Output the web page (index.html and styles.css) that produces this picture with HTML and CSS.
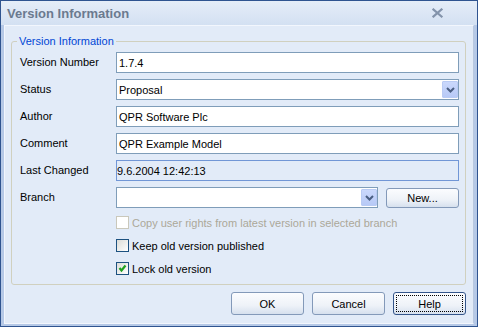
FILE: index.html
```html
<!DOCTYPE html>
<html>
<head>
<meta charset="utf-8">
<link rel="stylesheet" href="styles.css">
</head>
<body>
<div class="window">
  <div class="titlebar">
    <span class="title">Version Information</span>
    <svg class="close" width="11" height="10" viewBox="0 0 11 10"><path d="M1.5 1.5 L9.5 8.5 M9.5 1.5 L1.5 8.5" stroke="#8393ab" stroke-width="2.2" stroke-linecap="square" fill="none"/></svg>
  </div>
  <div class="frame">
    <div class="body">
      <fieldset class="group">
        <legend>Version Information</legend>
        <div class="form">
          <label class="lbl">Version Number</label>
          <div class="input">1.7.4</div>
          <label class="lbl">Status</label>
          <div class="input combo"><span class="val">Proposal</span><span class="drop"><svg width="9" height="6" viewBox="0 0 9 6"><path d="M1 1 L4.5 4.5 L8 1" stroke="#4a5e82" stroke-width="2" fill="none"/></svg></span></div>
          <label class="lbl">Author</label>
          <div class="input">QPR Software Plc</div>
          <label class="lbl">Comment</label>
          <div class="input">QPR Example Model</div>
          <label class="lbl">Last Changed</label>
          <div class="input readonly">9.6.2004 12:42:13</div>
          <label class="lbl">Branch</label>
          <div class="branch">
            <div class="input combo"><span class="val"></span><span class="drop"><svg width="9" height="6" viewBox="0 0 9 6"><path d="M1 1 L4.5 4.5 L8 1" stroke="#4a5e82" stroke-width="2" fill="none"/></svg></span></div>
            <div class="btn new">New...</div>
          </div>
        </div>
        <div class="checks">
          <div class="check disabled"><span class="box"></span><span>Copy user rights from latest version in selected branch</span></div>
          <div class="check"><span class="box"></span><span>Keep old version published</span></div>
          <div class="check"><span class="box"><svg width="11" height="11" viewBox="0 0 11 11"><path d="M2.5 5 L4.5 7.5 L8.5 2.5" stroke="#21a121" stroke-width="2.2" fill="none"/></svg></span><span>Lock old version</span></div>
        </div>
      </fieldset>
      <div class="buttons">
        <div class="btn">OK</div>
        <div class="btn">Cancel</div>
        <div class="btn default"><span class="focus">Help</span></div>
      </div>
    </div>
  </div>
</div>
</body>
</html>
```
FILE: styles.css
```css
* { box-sizing: border-box; }
html, body { margin: 0; padding: 0; }
body {
  width: 478px;
  height: 327px;
  overflow: hidden;
  font-family: "Liberation Sans", Arial, sans-serif;
  font-size: 11px;
  color: #000;
  background: #e2ebf8;
}
.window {
  width: 478px;
  height: 327px;
  border: 1px solid #2f5490;
  display: flex;
  flex-direction: column;
  background: #b6c9e7;
}
.titlebar {
  height: 24px;
  flex: none;
  display: flex;
  align-items: center;
  justify-content: space-between;
  padding: 0 34px 0 6px;
  background: linear-gradient(#e5edf8, #d3e0f2);
}
.title {
  font-weight: bold;
  font-size: 13px;
  color: #6b7a8f;
}
.close { display: block; }
.frame {
  flex: 1;
  display: flex;
  padding: 0 3px 2px 3px;
}
.body {
  flex: 1;
  display: flex;
  flex-direction: column;
  border: 1px solid #f2f6fd;
  border-right-color: #b8c8e0;
  background: #e2ebf8;
  padding: 9px 7px 0 6px;
}
.group {
  margin: 0;
  border: 1px solid #d0d0bf;
  border-radius: 3px;
  padding: 4px 6px 9px 8px;
  min-width: 0;
}
.group legend {
  color: #0046d5;
  padding: 0 2px;
  margin-left: -3px;
  line-height: 13px;
}
.form {
  display: grid;
  grid-template-columns: 96px 1fr;
  grid-auto-rows: 21px;
  row-gap: 6px;
  align-items: center;
}
.lbl { line-height: 13px; }
.input {
  height: 21px;
  border: 1px solid #7f9db9;
  background: #fff;
  padding-left: 2px;
  display: flex;
  align-items: center;
  white-space: nowrap;
}
.input.readonly {
  background: #e2ebf8;
  border-color: #7196d6;
  padding-left: 0;
}
.combo .val { flex: 1; }
.drop {
  width: 16px;
  height: 17px;
  margin-right: 0;
  background: linear-gradient(#cad8fc, #b7c9f6);
  border: 1px solid #b9cbf4;
  border-radius: 1px;
  display: flex;
  align-items: center;
  justify-content: center;
}
.branch {
  display: flex;
  align-items: center;
  gap: 8px;
  height: 21px;
}
.branch .combo { width: 262px; }
.btn {
  height: 23px;
  width: 73px;
  border: 1px solid #8399b9;
  border-radius: 3px;
  background: linear-gradient(#fbfcfe, #eef2f8 60%, #d6e0ee);
  display: flex;
  align-items: center;
  justify-content: center;
}
.btn.new { height: 20px; width: 73px; }
.checks {
  display: flex;
  flex-direction: column;
  gap: 10px;
  margin-top: 8px;
  padding-left: 96px;
}
.check {
  display: flex;
  align-items: center;
  gap: 3px;
  height: 13px;
}
.check .box {
  width: 13px;
  height: 13px;
  border: 1px solid #1c5180;
  background: linear-gradient(135deg, #dcdcd7, #fff);
  display: flex;
  align-items: center;
  justify-content: center;
  flex: none;
}
.check.disabled { color: #aca899; }
.check.disabled .box { border-color: #cac8bb; background: #fff; }
.buttons {
  display: flex;
  justify-content: flex-end;
  gap: 8px;
  margin-top: 7px;
}
.btn.default { border-color: #34558a; padding: 2px; }
.focus {
  flex: 1;
  align-self: stretch;
  border: 1px dotted #000;
  display: flex;
  align-items: center;
  justify-content: center;
}
```
